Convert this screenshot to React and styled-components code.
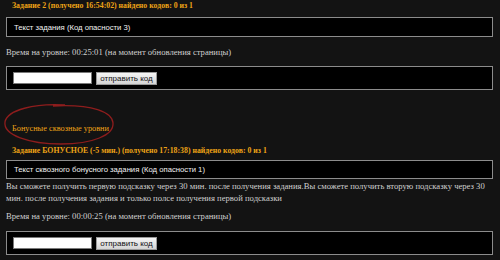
import React from 'react';
import styled, { createGlobalStyle } from 'styled-components';

const GlobalStyle = createGlobalStyle`
	html, body {
		margin: 0;
		padding: 0;
		background: #131313;
	}
	body {
		width: 500px;
		height: 260px;
		overflow: hidden;
	}
`;

const Page = styled.div`
	padding: 1px 7px 0 6px;
	font-family: 'Liberation Serif', 'Times New Roman', serif;
	color: #d2d2d2;
`;

const TaskTitle = styled.div`
	margin: ${props => props.top || 0}px 0 0 6px;
	font-size: 7.8px;
	line-height: 10px;
	font-weight: bold;
	color: #eea316;
	white-space: nowrap;
`;

const TaskBox = styled.div`
	margin-top: ${props => props.top || 0}px;
	height: ${props => props.h}px;
	box-sizing: border-box;
	border: 1px solid #8c8c8c;
	background: #000;
	display: flex;
	align-items: center;
	padding: 0 6px;
	gap: 4px;
`;

const TaskText = styled.span`
	font-family: 'Liberation Sans', Arial, sans-serif;
	font-size: 7.7px;
	color: #f2f2f2;
	padding-left: 1px;
`;

const Info = styled.p`
	margin: ${props => props.top || 0}px 0 0 0;
	font-size: 8.65px;
	line-height: 12px;
	color: #d0d0d0;
`;

const CodeInput = styled.input`
	width: 79px;
	height: 12px;
	box-sizing: border-box;
	border: 1px solid #7a7a7a;
	background: #fff;
	padding: 0;
	margin: 0;
`;

const SendButton = styled.button`
	height: 13px;
	width: 61px;
	box-sizing: border-box;
	padding: 0;
	margin: 0;
	border: 1px solid #9a9a9a;
	background: linear-gradient(#f6f6f6, #d4d4d4);
	font-family: 'Liberation Sans', Arial, sans-serif;
	font-size: 8px;
	line-height: 11px;
	color: #111;
`;

const BonusHeader = styled.div`
	position: relative;
	margin-top: 13px;
	height: 43px;
	display: flex;
	align-items: flex-end;
	padding: 0 0 12px 6px;
	box-sizing: border-box;
`;

const BonusLabel = styled.span`
	font-size: 8.3px;
	line-height: 11px;
	color: #eea316;
`;

const Circle = styled.svg`
	position: absolute;
	left: -3px;
	top: 0;
	width: 111px;
	height: 42px;
	overflow: visible;
	pointer-events: none;
`;

const CodeForm = ({ top }) => (
	<TaskBox top={top} h={24}>
		<CodeInput type="text" />
		<SendButton>отправить код</SendButton>
	</TaskBox>
);

const App = () => (
	<>
		<GlobalStyle />
		<Page>
			<TaskTitle>Задание 2 (получено 16:54:02) найдено кодов: 0 из 1</TaskTitle>
			<TaskBox top={6} h={20}>
				<TaskText>Текст задания (Код опасности 3)</TaskText>
			</TaskBox>
			<Info top={9}>Время на уровне: 00:25:01 (на момент обновления страницы)</Info>
			<CodeForm top={8} />

			<BonusHeader>
				<Circle viewBox="0 0 111 42">
					<path
						d="M62 2 C 32 0, 4 7, 2 19 C 0 32, 26 41, 58 41 C 90 41, 111 32, 110 20 C 109 9, 90 1, 50 3"
						fill="none"
						stroke="#8e1d1d"
						strokeWidth="1.3"
					/>
				</Circle>
				<BonusLabel>Бонусные сквозные уровни</BonusLabel>
			</BonusHeader>

			<TaskTitle>Задание БОНУСНОЕ (-5 мин.) (получено 17:18:38) найдено кодов: 0 из 1</TaskTitle>
			<TaskBox top={4} h={19}>
				<TaskText>Текст сквозного бонусного задания (Код опасности 1)</TaskText>
			</TaskBox>
			<Info top={1}>
				Вы сможете получить первую подсказку через 30 мин. после получения задания.Вы сможете получить вторую подсказку через 30 мин. после получения задания и только полсе получения первой подсказки
			</Info>
			<Info top={6}>Время на уровне: 00:00:25 (на момент обновления страницы)</Info>
			<CodeForm top={9} />
		</Page>
	</>
);

export default App;
